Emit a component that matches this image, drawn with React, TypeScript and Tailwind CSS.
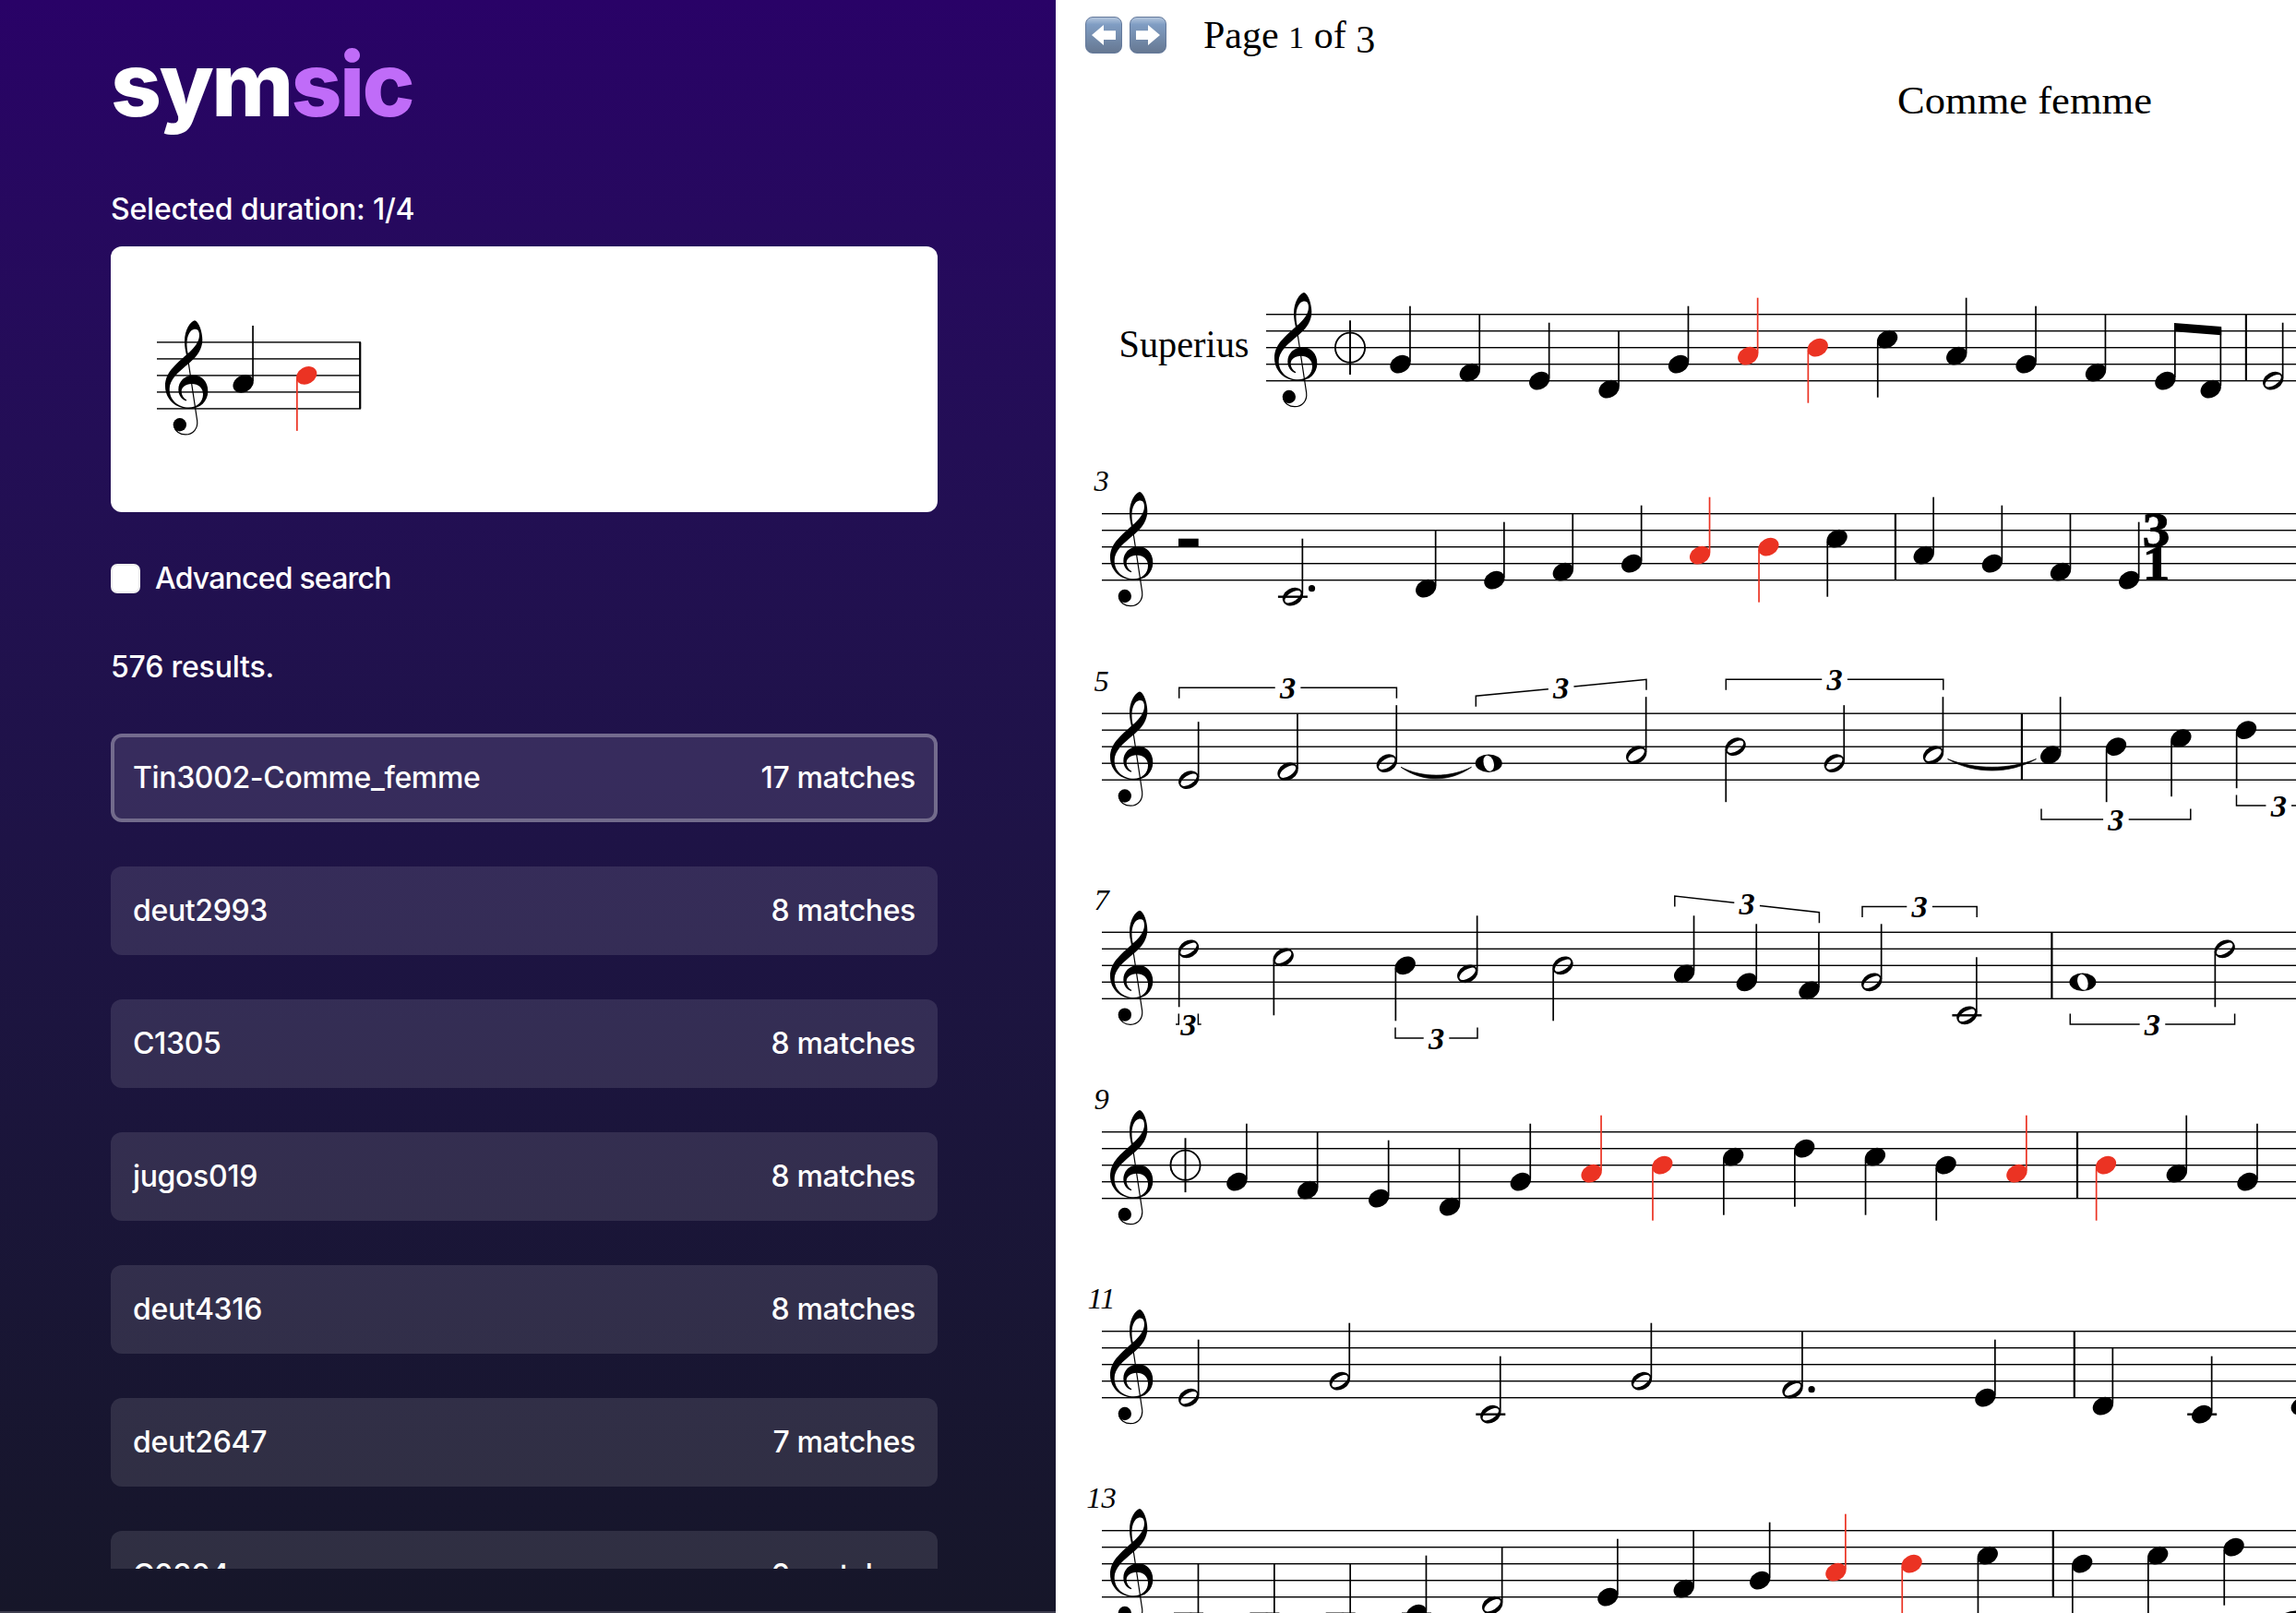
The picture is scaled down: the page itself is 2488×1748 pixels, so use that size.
import React from "react";

const RED = "#eb3323";

type Kind = "q" | "h" | "w";
// x of the head's left edge, staff position counted down from the top line, kind, flags
type N = { x: number; p: number; k?: Kind; down?: boolean; red?: boolean; dot?: boolean; noStem?: boolean };

const HEAD = "M10.13 -5.85A11.7 8.9 -30 1 1 -10.13 5.85A11.7 8.9 -30 1 1 10.13 -5.85Z";
const HALF = HEAD + "M8.3 -5.4A9.9 4.7 -33 1 0 -8.3 5.4A9.9 4.7 -33 1 0 8.3 -5.4Z";

function Note({ n, top }: { n: N; top: number }) {
  const y = top + n.p * 9;
  const k = n.k ?? "q";
  const c = n.red ? RED : "#000";
  const cx = n.x + (k === "w" ? 14.5 : 11.2);
  const len = n.p === 4 && n.down ? 60 : 63;
  return (
    <g>
      {n.p >= 10 && <rect x={cx - 16} y={top + 90 - 1.2} width={32} height={2.4} />}
      {k === "w" ? (
        <g transform={`translate(${cx} ${y})`}>
          <ellipse rx={14.5} ry={9.7} />
          <ellipse rx={8.7} ry={5.5} fill="#fff" transform="rotate(74)" />
        </g>
      ) : (
        <path d={k === "h" ? HALF : HEAD} fillRule="evenodd" fill={c} transform={`translate(${cx} ${y})`} />
      )}
      {k !== "w" && !n.noStem && (
        <rect
          x={n.down ? n.x : n.x + 20.8}
          y={n.down ? y + 3 : y - len}
          width={1.7}
          height={len - 3}
          fill={c}
        />
      )}
      {n.dot && <circle cx={n.x + 31.8} cy={n.p % 2 ? y : y - 9} r={3.6} />}
    </g>
  );
}

function Clef({ x, top }: { x: number; top: number }) {
  return (
    <g transform={`translate(${x} ${top}) scale(0.33333) translate(-27 -140)`}>
      <path
        fillRule="evenodd"
        d="M150 69C136 72 117 100 117 137C117 155 120 168 123 181C85 215 54 240 54 282C54 325 88 356 131 356C168 356 193 332 193 299C193 268 172 247 146 247C117 247 97 268 97 294C97 312 107 325 122 331L124 328C113 321 107 312 107 300C107 286 120 275 140 275C162 275 177 288 177 309C177 334 157 352 131 352C95 352 68 328 68 292C68 262 95 238 133 207C160 185 175 160 175 133C175 105 163 72 150 69ZM155 98C163 98 167 112 164 126C159 146 145 162 128 176C123 155 121 120 138 103C143 99 149 97 155 98Z"
      />
      <path d="M124 178L131 215L158 395C161 420 145 440 120 440C102 440 86 430 83 412" fill="none" stroke="#000" strokeWidth={3.6} />
      <circle cx={101.5} cy={408} r={21.5} />
    </g>
  );
}

function Staff({ x, end, top, children }: { x: number; end: number; top: number; children?: React.ReactNode }) {
  return (
    <g>
      {[0, 1, 2, 3, 4].map((i) => (
        <rect key={i} x={x} y={top + i * 18 - 0.7} width={end - x} height={1.4} />
      ))}
      <Clef x={x} top={top} />
      {children}
    </g>
  );
}

const Bar = ({ x, top }: { x: number; top: number }) => <rect x={x - 1.1} y={top} width={2.2} height={72} />;

const Mensur = ({ x, top }: { x: number; top: number }) => (
  <g fill="none" stroke="#000" strokeWidth={1.9}>
    <circle cx={x} cy={top + 36} r={16.1} />
    <path d={`M${x} ${top + 6.6}V${top + 65.4}`} />
  </g>
);

function Tuplet({ x1, y1, x2, y2 = y1, below }: { x1: number; y1: number; x2: number; y2?: number; below?: boolean }) {
  const c = (x1 + x2) / 2;
  const at = (x: number) => y1 + ((y2 - y1) * (x - x1)) / (x2 - x1);
  const h = below ? -11.5 : 11.5;
  return (
    <g>
      <path
        d={`M${x1} ${y1 + h}V${y1}L${c - 13.8} ${at(c - 13.8)}M${c + 13.8} ${at(c + 13.8)}L${x2} ${y2}V${y2 + h}`}
        fill="none"
        stroke="#000"
        strokeWidth={1.5}
      />
      <text x={c} y={at(c) + 11.6} textAnchor="middle" className="text-[34.5px] font-bold italic">
        3
      </text>
    </g>
  );
}

const Tie = ({ x1, x2, y, d }: { x1: number; x2: number; y: number; d: number }) => {
  const w = x2 - x1;
  return (
    <path
      d={`M${x1} ${y}C${x1 + w * 0.3} ${y + d * 1.45} ${x2 - w * 0.3} ${y + d * 1.45} ${x2} ${y}C${x2 - w * 0.3} ${y + d * 1.02} ${x1 + w * 0.3} ${y + d * 1.02} ${x1} ${y}Z`}
      stroke="#000"
      strokeWidth={0.7}
    />
  );
};

type System = { top: number; label?: string; x?: number; bars: number[]; notes: N[] };

const systems: System[] = [
  {
    top: 340.7,
    x: 1372,
    bars: [2433.9],
    notes: [
      { x: 1506.3, p: 6 }, { x: 1581.6, p: 7 }, { x: 1657, p: 8 }, { x: 1732.4, p: 9 }, { x: 1807.8, p: 6 },
      { x: 1883, p: 5, red: true }, { x: 1958.5, p: 4, down: true, red: true }, { x: 2033.9, p: 3, down: true },
      { x: 2109, p: 5 }, { x: 2184.4, p: 6 }, { x: 2259.8, p: 7 },
      { x: 2335.2, p: 8, noStem: true }, { x: 2384.5, p: 9, noStem: true }, { x: 2452, p: 8, k: "h" },
    ],
  },
  {
    top: 556.7,
    label: "3",
    bars: [2053.9],
    notes: [
      { x: 1389.7, p: 10, k: "h", dot: true }, { x: 1534, p: 9 }, { x: 1608.2, p: 8 }, { x: 1682.6, p: 7 },
      { x: 1757, p: 6 }, { x: 1830.9, p: 5, red: true }, { x: 1905.2, p: 4, down: true, red: true },
      { x: 1979.4, p: 3, down: true }, { x: 2073.5, p: 5 }, { x: 2147.7, p: 6 }, { x: 2221.8, p: 7 }, { x: 2296, p: 8 },
    ],
  },
  {
    top: 773.2,
    label: "5",
    bars: [2190.9],
    notes: [
      { x: 1277, p: 8, k: "h" }, { x: 1384.3, p: 7, k: "h" }, { x: 1491.6, p: 6, k: "h" }, { x: 1598.7, p: 6, k: "w" },
      { x: 1762, p: 5, k: "h" }, { x: 1869.4, p: 4, k: "h", down: true }, { x: 1976.6, p: 6, k: "h" },
      { x: 2083.8, p: 5, k: "h" }, { x: 2211, p: 5 }, { x: 2281.8, p: 4, down: true }, { x: 2352.2, p: 3, down: true },
      { x: 2422.8, p: 2, down: true },
    ],
  },
  {
    top: 1010.3,
    label: "7",
    bars: [2223.4],
    notes: [
      { x: 1276.8, p: 2, k: "h", down: true }, { x: 1379.5, p: 3, k: "h", down: true }, { x: 1511.5, p: 4, down: true },
      { x: 1579, p: 5, k: "h" }, { x: 1682.3, p: 4, k: "h", down: true }, { x: 1813.9, p: 5 }, { x: 1881.6, p: 6 },
      { x: 1949.3, p: 7 }, { x: 2017, p: 6, k: "h" }, { x: 2120.2, p: 10, k: "h" }, { x: 2242.4, p: 6, k: "w" },
      { x: 2399.5, p: 2, k: "h", down: true },
    ],
  },
  {
    top: 1226.7,
    label: "9",
    bars: [2251],
    notes: [
      { x: 1329.2, p: 6 }, { x: 1406, p: 7 }, { x: 1483, p: 8 }, { x: 1559.8, p: 9 }, { x: 1636.6, p: 6 },
      { x: 1713.4, p: 5, red: true }, { x: 1790.1, p: 4, down: true, red: true }, { x: 1867, p: 3, down: true },
      { x: 1944, p: 2, down: true }, { x: 2020.7, p: 3, down: true }, { x: 2097.4, p: 4, down: true },
      { x: 2174.2, p: 5, red: true }, { x: 2270.8, p: 4, down: true, red: true }, { x: 2347.6, p: 5 }, { x: 2424.3, p: 6 },
    ],
  },
  {
    top: 1442.7,
    label: "11",
    bars: [2247.8],
    notes: [
      { x: 1277, p: 8, k: "h" }, { x: 1440.6, p: 6, k: "h" }, { x: 1604.1, p: 10, k: "h" }, { x: 1767.7, p: 6, k: "h" },
      { x: 1931.3, p: 7, k: "h", dot: true }, { x: 2140.2, p: 8 }, { x: 2267.7, p: 9 }, { x: 2375, p: 10 }, { x: 2482.6, p: 9 },
    ],
  },
  {
    top: 1658.7,
    label: "13",
    bars: [2224.8],
    notes: [
      { x: 1276.8, p: 11 }, { x: 1359.2, p: 11 }, { x: 1441.5, p: 11 }, { x: 1523.8, p: 10 }, { x: 1606, p: 9, k: "h" },
      { x: 1731.2, p: 8 }, { x: 1813.5, p: 7 }, { x: 1896, p: 6 }, { x: 1978.2, p: 5, red: true },
      { x: 2060.4, p: 4, down: true, red: true }, { x: 2142.6, p: 3, down: true }, { x: 2245, p: 4, down: true },
      { x: 2327, p: 3, down: true }, { x: 2409.4, p: 2, down: true },
    ],
  },
];

function Score() {
  return (
    <svg className="block h-[1672px] w-[1344px] font-['Liberation_Serif',serif]" viewBox="1144 76 1344 1672">
      <text x={2056} y={122.5} textLength={276} lengthAdjust="spacingAndGlyphs" className="text-[43px]">Comme femme</text>
      <text x={1212.5} y={386.7} textLength={141} lengthAdjust="spacingAndGlyphs" className="text-[42px]">Superius</text>

      {systems.map((s) => (
        <Staff key={s.top} x={s.x ?? 1194} end={2488} top={s.top}>
          {s.label && (
            <text x={1193.5} y={s.top - 24.3} textAnchor="middle" className="text-[32.5px] italic">
              {s.label}
            </text>
          )}
          {s.bars.map((b) => (
            <Bar key={b} x={b} top={s.top} />
          ))}
          {s.notes.map((n) => (
            <Note key={n.x} n={n} top={s.top} />
          ))}
        </Staff>
      ))}

      <Mensur x={1463} top={340.7} />
      <Mensur x={1284.5} top={1226.7} />

      {/* beamed eighths */}
      <path d="M2356 350L2407.2 354V363.3L2356 359.3Z" />
      <rect x={2356} y={352} width={1.7} height={57} />
      <rect x={2405.5} y={356} width={1.7} height={62} />

      {/* half rest and 3/1 time signature */}
      <rect x={1277} y={583.7} width={21.7} height={9} />
      <text x={2336.5} y={592.4} textAnchor="middle" textLength={30} lengthAdjust="spacingAndGlyphs" stroke="#000" strokeWidth={0.8} className="text-[53px] font-bold">3</text>
      <text x={2336.5} y={628.4} textAnchor="middle" textLength={30} lengthAdjust="spacingAndGlyphs" stroke="#000" strokeWidth={0.8} className="text-[53px] font-bold">1</text>

      <Tuplet x1={1277.7} x2={1513.4} y1={745.3} />
      <Tuplet x1={1599.3} x2={1784} y1={754.3} y2={736.3} />
      <Tuplet x1={1870.3} x2={2105.8} y1={736.3} />
      <Tuplet x1={2212} x2={2373.8} y1={888} below />
      <Tuplet x1={2423.5} x2={2515} y1={873} below />
      <Tie x1={1518} x2={1594.5} y={831.3} d={11.5} />
      <Tie x1={2110.5} x2={2206.5} y={822.5} d={11.5} />

      <Tuplet x1={1277.3} x2={1298.4} y1={1110} below />
      <Tuplet x1={1512} x2={1601} y1={1125} below />
      <Tuplet x1={1814.8} x2={1971.4} y1={971} y2={988.7} />
      <Tuplet x1={2018} x2={2142.2} y1={982.4} />
      <Tuplet x1={2243.3} x2={2421.6} y1={1110} below />

      <path d="M2474 1749Q2480 1746 2488 1745.5V1749Z" />
    </svg>
  );
}

function ArrowKey({ flip }: { flip?: boolean }) {
  return (
    <button className="flex size-10 items-center justify-center rounded-[8px] border border-[#64799b] bg-linear-to-b from-[#b4c6dd] via-[#809dc3] via-20% to-[#667892]">
      <svg viewBox="0 0 40 40" className={flip ? "size-10 shrink-0 -scale-x-100" : "size-10 shrink-0"}>
        <path d="M7 20L20 9V15.2H33V25H20V31Z" fill="#fff" />
      </svg>
    </button>
  );
}

const results: [string, number][] = [
  ["Tin3002-Comme_femme", 17],
  ["deut2993", 8],
  ["C1305", 8],
  ["jugos019", 8],
  ["deut4316", 8],
  ["deut2647", 7],
  ["C0304", 6],
];

export default function App() {
  return (
    <div className="flex h-[1748px] w-[2488px] overflow-hidden bg-white">
      <aside className="flex w-[1144px] shrink-0 flex-col border-b-2 border-[#3e3d4f] bg-linear-to-b from-[#290267] to-[#161629] px-[120px] pr-[128px] font-['Inter',sans-serif] text-[32px] leading-[48px] font-[450] text-white">
        <h1 className="mt-[43px] h-24 text-[96px] leading-[96px] font-extrabold tracking-[-2.6px]">
          sym<span className="text-[#c06cf8]">sic</span>
        </h1>
        <p className="mt-[64px] h-[48px] tracking-[-0.2px]">Selected duration: 1/4</p>
        <div className="mt-[16px] h-[288px] w-[896px] shrink-0 rounded-[12px] bg-white">
          <svg className="block h-[288px] w-[896px]" viewBox="120 267 896 288">
            <Staff x={170} end={391} top={370.9}>
              <Bar x={390.2} top={370.9} />
              <Note n={{ x: 252.4, p: 5 }} top={370.9} />
              <Note n={{ x: 321, p: 4, down: true, red: true }} top={370.9} />
            </Staff>
          </svg>
        </div>
        <label className="mt-12 flex h-12 items-center gap-4 tracking-[-0.8px]">
          <span className="size-8 rounded-[7px] border-2 border-[#eee] bg-white" />
          Advanced search
        </label>
        <p className="mt-12 h-12 tracking-[-0.2px]">576 results.</p>
        <div className="mt-12 flex h-[905px] flex-col gap-12 overflow-hidden">
          {results.map(([name, count], i) => (
            <div
              key={name}
              className={
                "flex h-24 shrink-0 items-center justify-between rounded-[12px] border-4 bg-white/11 px-5 tracking-[-0.35px] " +
                (i === 0 ? "border-white/30" : "border-transparent")
              }
            >
              <span>{name}</span>
              <span>{count} matches</span>
            </div>
          ))}
        </div>
      </aside>

      <main className="min-w-0 flex-1">
        <header className="flex h-[76px] items-center pl-8 font-['Liberation_Serif',serif] text-[42px] text-black">
          <div className="flex gap-2">
            <ArrowKey />
            <ArrowKey flip />
          </div>
          <p className="ml-[40px] pt-[3px] leading-[60px]">
            Page <span className="text-[34px]">1</span> of <span className="relative top-[5px]">3</span>
          </p>
        </header>
        <Score />
      </main>
    </div>
  );
}
